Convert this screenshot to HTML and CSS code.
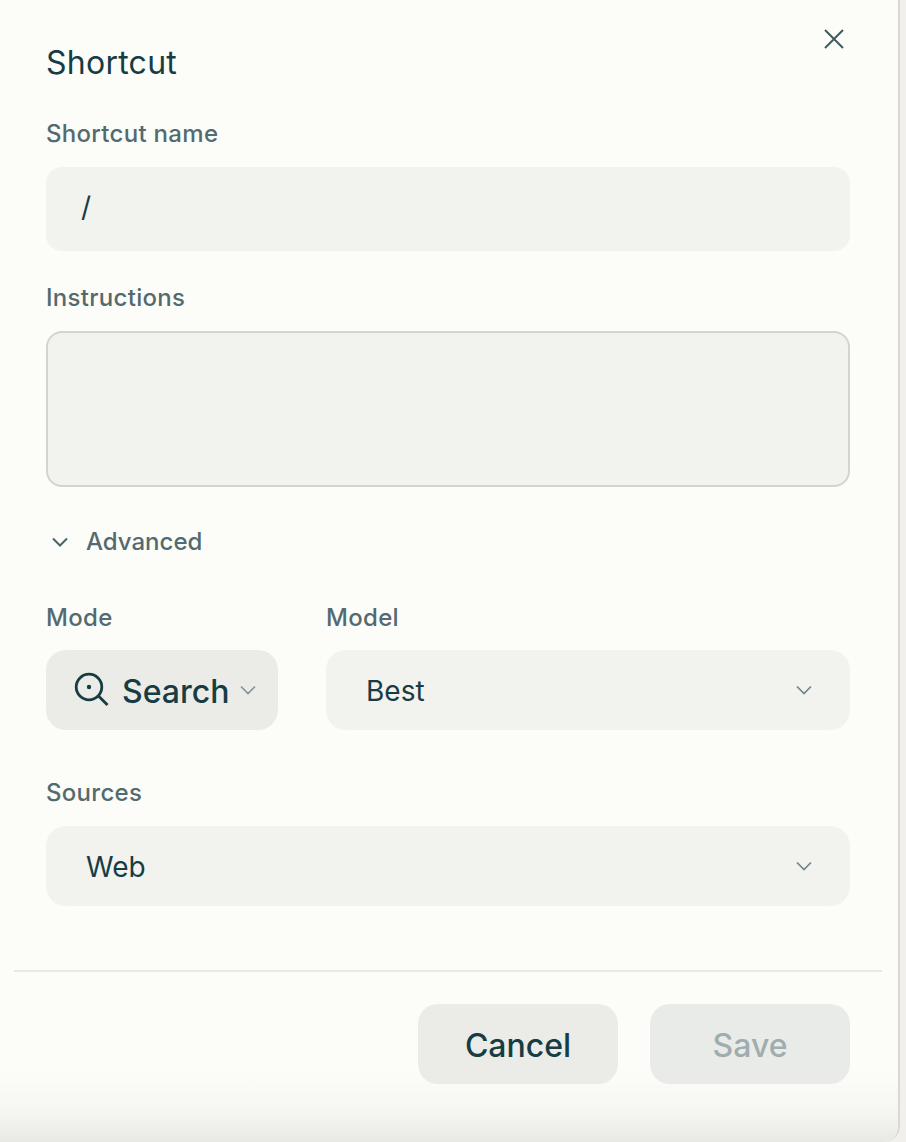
FILE: index.html
```html
<!DOCTYPE html>
<html lang="en">
<head>
<meta charset="utf-8">
<title>Shortcut</title>
<link rel="stylesheet" href="styles.css">
</head>
<body>
<div class="modal">
  <button class="close" aria-label="Close">
    <svg width="20" height="20" viewBox="0 0 20 20"><path d="M1 1L19 19M19 1L1 19" fill="none" stroke="#3f5a62" stroke-width="2"/></svg>
  </button>
  <div class="content">
    <h1 class="title">Shortcut</h1>
    <div class="label label-name">Shortcut name</div>
    <div class="input">/</div>
    <div class="label label-instr">Instructions</div>
    <div class="textarea"></div>
    <div class="advanced">
      <svg width="18" height="10" viewBox="0 0 18 10"><path d="M2 1.5L9 8.5L16 1.5" fill="none" stroke="#4a636b" stroke-width="2"/></svg>
      <span>Advanced</span>
    </div>
    <div class="row">
      <div class="col-mode">
        <div class="label">Mode</div>
        <div class="mode-select">
          <svg class="mode-icon" width="36" height="36" viewBox="0 0 36 36"><circle cx="15" cy="15" r="12.8" fill="none" stroke="#173c44" stroke-width="2.8"/><circle cx="15" cy="15" r="2.2" fill="#173c44"/><path d="M24.5 24L33.5 33" fill="none" stroke="#173c44" stroke-width="2.8"/></svg>
          <span>Search</span>
          <svg width="18" height="10" viewBox="0 0 18 10"><path d="M2 1.5L9 8.5L16 1.5" fill="none" stroke="#84979b" stroke-width="1.7"/></svg>
        </div>
      </div>
      <div class="col-model">
        <div class="label">Model</div>
        <div class="select"><span>Best</span>
          <svg width="18" height="10" viewBox="0 0 18 10"><path d="M2 1.5L9 8.5L16 1.5" fill="none" stroke="#6f858a" stroke-width="1.7"/></svg>
        </div>
      </div>
    </div>
    <div class="label label-sources">Sources</div>
    <div class="select"><span>Web</span>
      <svg width="18" height="10" viewBox="0 0 18 10"><path d="M2 1.5L9 8.5L16 1.5" fill="none" stroke="#6f858a" stroke-width="1.7"/></svg>
    </div>
  </div>
  <div class="footer">
    <button class="btn btn-cancel">Cancel</button>
    <button class="btn btn-save">Save</button>
  </div>
  <div class="fade"></div>
</div>
</body>
</html>
```
FILE: styles.css
```css
* { box-sizing: border-box; }
html, body { margin: 0; height: 100%; overflow: hidden; background: #f1f0ec; }
body { font-family: Inter, "Liberation Sans", Arial, sans-serif; color: #173c44; }
.modal {
  position: relative;
  width: 900px;
  height: 1142px;
  background: #fcfdf8;
  border-right: 2px solid #d9d9d3;
  border-bottom-right-radius: 16px;
  overflow: hidden;
}
.close {
  position: absolute;
  top: 29px;
  left: 824px;
  width: 20px;
  height: 20px;
  padding: 0;
  border: 0;
  background: none;
  display: flex;
}
.content { padding: 43px 48px 0 46px; }
.title { margin: 0; font-size: 32px; line-height: 40px; font-weight: 400; letter-spacing: 0.25px; }
.label { font-size: 24px; line-height: 32px; color: #536a70; font-weight: 500; letter-spacing: 0.3px; }
.label-name { margin-top: 35px; }
.input {
  margin-top: 17px;
  height: 84px;
  padding-left: 35px;
  border-radius: 16px;
  background: #f2f2ee;
  font-size: 28px;
  line-height: 80px;
}
.label-instr { margin-top: 31px; }
.textarea {
  margin-top: 17px;
  height: 156px;
  border: 2px solid #d2d4ce;
  border-radius: 16px;
  background: #f2f2ee;
}
.advanced {
  margin-top: 39px;
  display: flex;
  align-items: center;
  gap: 17px;
  padding-left: 5px;
  font-size: 24px;
  line-height: 32px;
  color: #536a70;
  font-weight: 500;
}
.row { margin-top: 44px; display: flex; gap: 48px; }
.col-mode { width: 232px; flex: none; }
.col-model { flex: 1; }
.mode-select {
  margin-top: 16px;
  height: 80px;
  border-radius: 20px;
  background: #ebece7;
  display: flex;
  align-items: center;
  padding-left: 28px;
  font-size: 32px;
  font-weight: 500;
}
.mode-icon { margin-right: 12px; }
.mode-select span { margin-right: 10px; padding-top: 2px; }
.select {
  margin-top: 16px;
  height: 80px;
  border-radius: 20px;
  background: #f2f2ee;
  display: flex;
  align-items: center;
  justify-content: space-between;
  padding: 0 37px 0 40px;
  font-size: 28px;
}
.select span { padding-top: 2px; }
.label-sources { margin-top: 47px; }
.label-sources + .select { margin-top: 17px; }
.footer {
  margin: 64px 16px 0 14px;
  padding: 32px 32px 0 0;
  border-top: 2px solid #e8e9e3;
  display: flex;
  justify-content: flex-end;
  gap: 32px;
}
.btn {
  width: 200px;
  height: 80px;
  padding: 2px 0 0;
  border: 0;
  border-radius: 20px;
  font: 500 32px Inter, "Liberation Sans", Arial, sans-serif;
}
.btn-cancel { background: #ebece7; color: #173c44; }
.btn-save { background: #e9ebe8; color: #9fadae; }
.fade {
  position: absolute;
  left: 0;
  right: 0;
  bottom: 0;
  height: 70px;
  background: linear-gradient(to bottom, rgba(232,232,228,0), rgba(232,232,228,0.3) 55%, rgba(232,232,228,1));
  pointer-events: none;
}
```
